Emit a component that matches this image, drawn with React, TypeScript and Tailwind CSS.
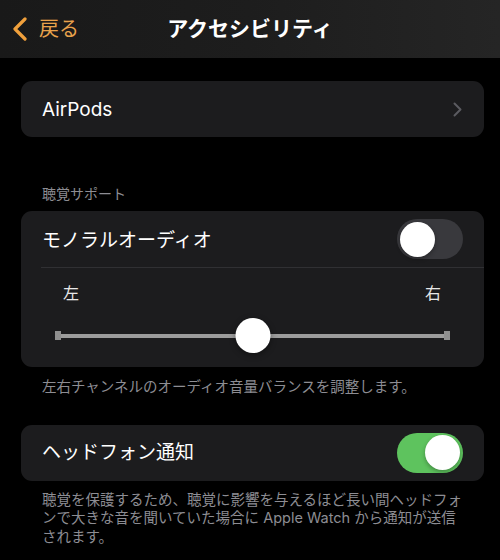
import React from 'react';

const font = { fontFamily: 'Inter, "Noto Sans CJK JP", sans-serif' };

function Toggle({ on }: { on: boolean }) {
  return (
    <div
      className={`flex h-[40px] w-[66px] items-center rounded-full px-[3px] ${
        on ? 'justify-end bg-[#5ec35e]' : 'justify-start bg-[#39393d]'
      }`}
    >
      <div className="h-[35px] w-[35px] rounded-full bg-white shadow-[0_2px_4px_rgba(0,0,0,0.3)]" />
    </div>
  );
}

export default function App() {
  return (
    <div className="h-[560px] w-[500px] overflow-hidden bg-black text-white" style={font}>
      {/* nav bar */}
      <div className="relative flex h-[58px] items-center bg-gradient-to-r from-[#191919] via-[#1d1d1d] to-[#252525]">
        <div className="flex items-center pl-[11px]">
          <svg width="18" height="24" viewBox="0 0 18 24" fill="none">
            <path d="M14 2 L4 12 L14 22" stroke="#f0a03c" strokeWidth="3.2" strokeLinecap="round" strokeLinejoin="round" />
          </svg>
          <span className="ml-[10px] text-[20px] leading-none text-[#e8a24c]">戻る</span>
        </div>
        <div className="pointer-events-none absolute inset-x-0 top-0 flex h-full items-center justify-center text-[21px] font-bold">
          アクセシビリティ
        </div>
      </div>

      <div className="flex flex-col pl-[21px] pr-[16px]">
        {/* AirPods */}
        <div className="mt-[23px] flex h-[56px] items-center justify-between rounded-[11px] bg-[#1c1c1e] pl-[21px] pr-[22px]">
          <span className="text-[19px] leading-none">AirPods</span>
          <svg width="9" height="15" viewBox="0 0 9 15" fill="none">
            <path d="M1.5 1.5 L7.5 7.5 L1.5 13.5" stroke="#5b5b60" strokeWidth="2" strokeLinecap="round" strokeLinejoin="round" />
          </svg>
        </div>

        <div className="mt-[50px] pl-[21px] text-[14px] leading-none text-[#8d8d93]">聴覚サポート</div>

        {/* mono audio + balance */}
        <div className="mt-[10px] rounded-[11px] bg-[#1c1c1e]">
          <div className="flex h-[56px] items-center justify-between pl-[21px] pr-[21px]">
            <span className="pt-[3px] text-[19px] leading-none">モノラルオーディオ</span>
            <Toggle on={false} />
          </div>
          <div className="ml-[20px] h-px bg-[#303033]" />
          <div className="flex justify-between pl-[42px] pr-[43px] pt-[17px] text-[16px] leading-none text-[#e8e8e8]">
            <span>左</span>
            <span>右</span>
          </div>
          <div className="relative mx-[34px] mt-[17px] mb-[14px] flex h-[35px] items-center">
            <div className="h-[9px] w-[6px] bg-[#8f8f8f]" />
            <div className="h-[4px] flex-1 bg-[#9c9c9c]" />
            <div className="h-[9px] w-[6px] bg-[#8f8f8f]" />
            <div className="absolute left-1/2 top-0 h-[35px] w-[35px] -translate-x-1/2 rounded-full bg-white shadow-[0_2px_6px_rgba(0,0,0,0.4)]" />
          </div>
        </div>

        <div className="mt-[11px] whitespace-nowrap pl-[21px] text-[14.5px] leading-[18.5px] text-[#8d8d93]">
          左右チャンネルのオーディオ音量バランスを調整します。
        </div>

        {/* headphone notification */}
        <div className="mt-[28px] flex h-[56px] items-center justify-between rounded-[11px] bg-[#1c1c1e] pl-[21px] pr-[21px]">
          <span className="text-[19px] leading-none">ヘッドフォン通知</span>
          <Toggle on />
        </div>

        <div className="mt-[10px] whitespace-nowrap pl-[21px] text-[14.5px] leading-[18.5px] text-[#8d8d93]">
          聴覚を保護するため、聴覚に影響を与えるほど長い間ヘッドフォ
          <br />
          ンで大きな音を聞いていた場合に Apple Watch から通知が送信
          <br />
          されます。
        </div>
      </div>
    </div>
  );
}
